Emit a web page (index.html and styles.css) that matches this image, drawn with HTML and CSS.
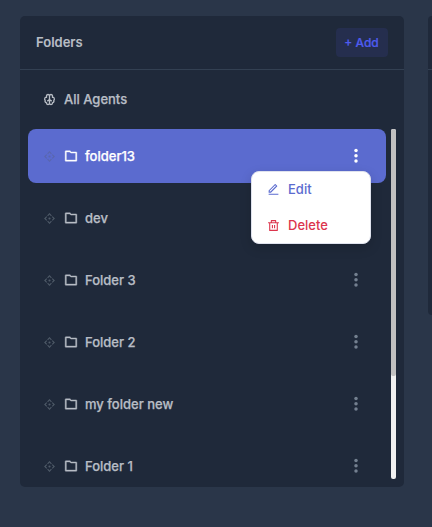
FILE: index.html
```html
<!DOCTYPE html>
<html lang="en">
<head>
<meta charset="utf-8">
<title>Folders</title>
<link rel="stylesheet" href="styles.css">
</head>
<body>
<svg class="defs" aria-hidden="true">
  <symbol id="folder" viewBox="0 0 24 24"><path d="M4 5V19H20V7H11.586L9.586 5H4ZM12.414 5H21C21.552 5 22 5.448 22 6V20C22 20.552 21.552 21 21 21H3C2.448 21 2 20.552 2 20V4C2 3.448 2.448 3 3 3H10.414L12.414 5Z"/></symbol>
  <symbol id="drag" viewBox="0 0 24 24"><path d="M12 2L16.243 6.243L14.828 7.657L12 4.828L9.172 7.657L7.757 6.243L12 2ZM2 12L6.243 7.757L7.657 9.172L4.828 12L7.657 14.828L6.243 16.243L2 12ZM22 12L17.757 16.243L16.343 14.828L19.172 12L16.343 9.172L17.757 7.757L22 12ZM12 14A2 2 0 1 1 12 10A2 2 0 0 1 12 14ZM12 22L7.757 17.757L9.172 16.343L12 19.172L14.828 16.343L16.243 17.757L12 22Z"/></symbol>
  <symbol id="dots" viewBox="0 0 4 16"><circle cx="2" cy="2.5" r="1.75"/><circle cx="2" cy="7.8" r="1.75"/><circle cx="2" cy="13.1" r="1.75"/></symbol>
</svg>
<main class="page">
  <section class="panel">
    <header class="panel-header"><h1>Folders</h1><button class="add">+ Add</button></header>
    <div class="all"><svg class="icon brain" viewBox="0 0 24 24"><path d="M12 5A2.800 2.800 0 0 0 6.500 5V7Q3 7.500 3 11Q3 12.500 4 13.500Q3 17 6.500 18V19A2.800 2.800 0 0 0 12 19V5A2.800 2.800 0 0 1 17.500 5V7Q21 7.500 21 11Q21 12.500 20 13.500Q21 17 17.500 18V19A2.800 2.800 0 0 1 12 19M7.500 14.500Q12 14.500 12 10Q12 14.500 16.500 14.500M6.500 7V9M17.500 7V9"/></svg><span>All Agents</span></div>
    <div class="list-area">
      <div class="list">
        <div class="row active"><svg class="icon drag"><use href="#drag"/></svg><svg class="icon folder"><use href="#folder"/></svg><span>folder13</span><svg class="dots"><use href="#dots"/></svg>
          <div class="menu">
            <div class="item edit"><svg class="menu-icon" viewBox="0 0 24 24"><path d="M6.414 15.89L16.556 5.748L15.142 4.334L5 14.476V15.89H6.414ZM7.243 17.89H3V13.647L14.435 2.212C14.826 1.822 15.459 1.822 15.849 2.212L18.678 5.041C19.068 5.431 19.068 6.064 18.678 6.455L7.243 17.89ZM3 19.89H21V21.89H3V19.89Z"/></svg><span>Edit</span></div>
            <div class="item delete"><svg class="menu-icon" viewBox="0 0 24 24"><path d="M17 6H22V8H20V21C20 21.552 19.552 22 19 22H5C4.448 22 4 21.552 4 21V8H2V6H7V3C7 2.448 7.448 2 8 2H16C16.552 2 17 2.448 17 3V6ZM18 8H6V20H18V8ZM9 11H11V17H9V11ZM13 11H15V17H13V11ZM9 4V6H15V4H9Z"/></svg><span>Delete</span></div>
          </div>
        </div>
        <div class="row"><svg class="icon drag"><use href="#drag"/></svg><svg class="icon folder"><use href="#folder"/></svg><span>dev</span></div>
        <div class="row"><svg class="icon drag"><use href="#drag"/></svg><svg class="icon folder"><use href="#folder"/></svg><span>Folder 3</span><svg class="dots"><use href="#dots"/></svg></div>
        <div class="row"><svg class="icon drag"><use href="#drag"/></svg><svg class="icon folder"><use href="#folder"/></svg><span>Folder 2</span><svg class="dots"><use href="#dots"/></svg></div>
        <div class="row"><svg class="icon drag"><use href="#drag"/></svg><svg class="icon folder"><use href="#folder"/></svg><span>my folder new</span><svg class="dots"><use href="#dots"/></svg></div>
        <div class="row"><svg class="icon drag"><use href="#drag"/></svg><svg class="icon folder"><use href="#folder"/></svg><span>Folder 1</span><svg class="dots"><use href="#dots"/></svg></div>
      </div>
      <div class="track"><div class="thumb"></div></div>
    </div>
  </section>
  <aside class="panel side"><div class="panel-header"></div></aside>
</main>
</body>
</html>
```
FILE: styles.css
```css
* { box-sizing: border-box; }
body { margin: 0; background: #2a3649; color: #b8bdc5; font: 500 13px/20px Inter, sans-serif; overflow: hidden; }
.defs { display: none; }
.page { display: flex; align-items: flex-start; gap: 24px; width: 432px; height: 527px; padding: 16px 0 0 20px; }
.panel { flex: 0 0 384px; height: 471px; background: #1f293a; border-radius: 5px; }
.side { flex-basis: 4px; height: 299px; border-radius: 4px 0 0 4px; }
.panel-header { display: flex; align-items: center; justify-content: space-between; height: 54px; padding: 0 16px; border-bottom: 1px solid #334052; }
.side .panel-header { padding: 0; }
h1 { margin: 0 0 1px; font-size: 13px; line-height: 20px; font-weight: 600; -webkit-text-stroke: .1px; }
.add { width: 52px; height: 29px; padding: 0 1px 0 0; border: 0; border-radius: 4px; background: #252e4e; color: #4f5cf0; font: 500 12px/18px Inter, sans-serif; -webkit-text-stroke: .2px; }
svg { display: block; fill: currentColor; }
.icon { width: 13px; height: 13px; flex: none; }
.all { display: flex; align-items: center; height: 59px; padding: 0 0 1px 23px; gap: 8px; }
.all span, .row > span { -webkit-text-stroke: .25px; }
.brain { fill: none; stroke: currentColor; stroke-width: 2.4; }
.list-area { display: flex; height: 350px; padding: 0 8px; gap: 5px; }
.list { display: flex; flex-direction: column; gap: 8px; width: 358px; overflow: hidden; }
.row { position: relative; display: flex; align-items: center; flex: 0 0 54px; padding: 0 28px 0 15px; border-radius: 8px; }
.row.active { background: #5b6bcf; color: #fff; z-index: 1; }
.drag { color: #505b69; margin-right: 8px; }
.active .drag { color: #5966ad; }
.folder { width: 14px; height: 14px; margin-right: 7px; stroke: currentColor; stroke-width: .7; }
.dots { width: 4px; height: 16px; margin-left: auto; color: #748090; }
.active .dots { color: #fff; }
.menu { position: absolute; left: 223px; top: 42px; width: 120px; height: 73px; border: 1px solid #dfe2ed; border-radius: 8px; background: #fff; font-weight: 500; box-shadow: 0 4px 12px rgba(0, 0, 0, .15); }
.item { display: flex; align-items: center; gap: 8px; height: 36px; padding: 0 0 1px 15px; }
.item span { margin-bottom: 1px; }
.menu-icon { width: 13px; height: 13px; }
.edit { color: #5b6bcf; }
.delete { color: #dc354d; }
.track { width: 5px; height: 350px; background: #f1f1f1; border-radius: 2px; }
.thumb { height: 247px; background: #c1c1c1; border-radius: 2px; }
```
